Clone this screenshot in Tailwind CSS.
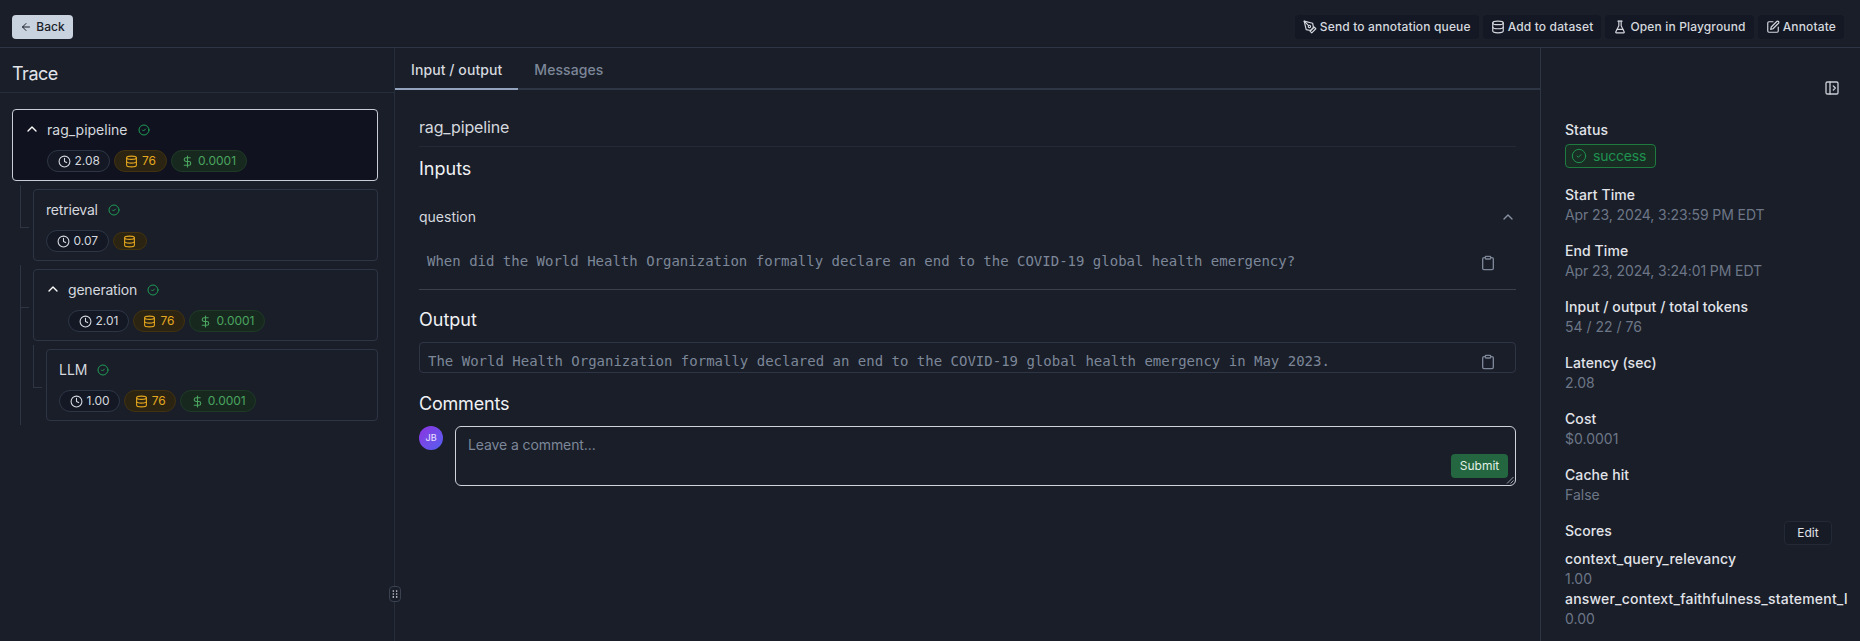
<!DOCTYPE html>
<html lang="en">
<head>
    <meta charset="UTF-8">
    <title>Trace</title>
    <script src="https://cdn.jsdelivr.net/npm/@tailwindcss/browser@4"></script>
</head>
<body class="bg-[#191e29] text-[#e2e4e9] font-['Inter',sans-serif] h-[641px] overflow-hidden">
    <!-- Top bar -->
    <header class="h-[48px] border-b border-[#2e3646] flex items-start justify-between pt-[15px] pl-3 pr-4">
        <button class="h-6 w-[61px] rounded bg-[#c9d2df] text-[#191e29] text-xs font-medium flex items-center justify-center gap-1">
            <svg class="w-3 h-3" viewBox="0 0 24 24" fill="none" stroke="currentColor" stroke-width="2" stroke-linecap="round" stroke-linejoin="round"><path d="m12 19-7-7 7-7"/><path d="M19 12H5"/></svg>
            Back
        </button>
        <div class="flex items-center gap-1 text-xs font-medium tracking-[0.15px] text-[#d5d8de]">
            <button class="h-6 px-2 rounded bg-[#141824] flex items-center gap-[3px]">
                <svg class="w-[14px] h-[14px]" viewBox="0 0 24 24" fill="none" stroke="currentColor" stroke-width="2" stroke-linecap="round" stroke-linejoin="round"><path d="m12 19 7-7 3 3-7 7-3-3z"/><path d="m18 13-1.5-7.5L2 2l3.5 14.5L13 18l5-5z"/><path d="m2 2 7.586 7.586"/><circle cx="11" cy="11" r="2"/></svg>
                Send to annotation queue
            </button>
            <button class="h-6 px-2 rounded bg-[#141824] flex items-center gap-[3px]">
                <svg class="w-[14px] h-[14px]" viewBox="0 0 24 24" fill="none" stroke="currentColor" stroke-width="2" stroke-linecap="round" stroke-linejoin="round"><ellipse cx="12" cy="5" rx="9" ry="3"/><path d="M3 5v14a9 3 0 0 0 18 0V5"/><path d="M3 12a9 3 0 0 0 18 0"/></svg>
                Add to dataset
            </button>
            <button class="h-6 px-2 rounded bg-[#141824] flex items-center gap-[3px]">
                <svg class="w-[14px] h-[14px]" viewBox="0 0 24 24" fill="none" stroke="currentColor" stroke-width="2" stroke-linecap="round" stroke-linejoin="round"><path d="M10 2v7.527a2 2 0 0 1-.211.896L4.72 20.55a1 1 0 0 0 .9 1.45h12.76a1 1 0 0 0 .9-1.45l-5.069-10.127A2 2 0 0 1 14 9.527V2"/><path d="M8.5 2h7"/><path d="M7 16h10"/></svg>
                Open in Playground
            </button>
            <button class="h-6 px-2 rounded bg-[#141824] flex items-center gap-[3px]">
                <svg class="w-[14px] h-[14px]" viewBox="0 0 24 24" fill="none" stroke="currentColor" stroke-width="2" stroke-linecap="round" stroke-linejoin="round"><path d="M12 3H5a2 2 0 0 0-2 2v14a2 2 0 0 0 2 2h14a2 2 0 0 0 2-2v-7"/><path d="M18.4 2.6a2.1 2.1 0 1 1 3 3L12 15l-4 1 1-4z"/></svg>
                Annotate
            </button>
        </div>
    </header>

    <div class="relative flex h-[593px]">
        <!-- Trace tree -->
        <aside class="w-[395px] shrink-0 border-r border-[#262d3b]">
            <h2 class="h-[45px] border-b border-[#262d3b] px-3 pt-[7px] flex items-center text-lg tracking-[-0.5px]">Trace</h2>
            <div class="pt-4 pl-3 pr-4 flex flex-col gap-2">
                <!-- rag_pipeline -->
                <div class="h-[72px] rounded border border-[#c8ccd4] bg-[#10131f] pt-[10px] px-3">
                    <div class="h-5 flex items-center text-sm text-[#d5d8de]">
                        <svg class="w-4 h-4 -ml-px mr-[7px] -translate-y-px text-white" viewBox="0 0 24 24" fill="none" stroke="currentColor" stroke-width="2" stroke-linecap="round" stroke-linejoin="round"><path d="m18 15-6-6-6 6"/></svg>
                        rag_pipeline
                        <svg class="w-3 h-3 ml-[10px] text-[#1f9d55]" viewBox="0 0 24 24" fill="none" stroke="currentColor" stroke-width="2" stroke-linecap="round" stroke-linejoin="round"><circle cx="12" cy="12" r="10"/><path d="m9 12 2 2 4-4"/></svg>
                    </div>
                    <div class="mt-[10px] ml-[22px] flex items-center gap-1 text-xs">
                        <span class="h-[22px] px-[9.5px] rounded-full border border-[#2e3646] bg-[#141824] flex items-center gap-1 text-[#d5d8de]">
                            <svg class="w-[13px] h-[13px]" viewBox="0 0 24 24" fill="none" stroke="currentColor" stroke-width="2" stroke-linecap="round" stroke-linejoin="round"><circle cx="12" cy="12" r="10"/><path d="M12 6v6l4 2"/></svg>
                            2.08
                        </span>
                        <span class="h-[22px] px-[9.5px] rounded-full border border-[#423210] bg-[#2c2412] flex items-center gap-1 text-[#e5a81e]">
                            <svg class="w-[13px] h-[13px]" viewBox="0 0 24 24" fill="none" stroke="currentColor" stroke-width="2" stroke-linecap="round" stroke-linejoin="round"><ellipse cx="12" cy="5" rx="9" ry="3"/><path d="M3 5v14a9 3 0 0 0 18 0V5"/><path d="M3 12a9 3 0 0 0 18 0"/></svg>
                            76
                        </span>
                        <span class="h-[22px] px-[9.5px] rounded-full border border-[#1f3a26] bg-[#17291f] flex items-center gap-1 text-[#4ba45f]">
                            <svg class="w-[13px] h-[13px]" viewBox="0 0 24 24" fill="none" stroke="currentColor" stroke-width="2" stroke-linecap="round" stroke-linejoin="round"><path d="M12 2v20"/><path d="M17 5H9.5a3.5 3.5 0 0 0 0 7h5a3.5 3.5 0 0 1 0 7H6"/></svg>
                            0.0001
                        </span>
                    </div>
                </div>

                <!-- retrieval -->
                <div class="relative ml-[21px] h-[72px] rounded border border-[#2e3646] pt-[10px] px-3">
                    <span class="absolute left-[-14px] top-[-5px] w-[9px] h-[43px] border-l border-b border-[#2e3646]"></span>
                    <div class="h-5 flex items-center text-sm text-[#d5d8de] tracking-[-0.2px]">
                        retrieval
                        <svg class="w-3 h-3 ml-[10px] text-[#1f9d55]" viewBox="0 0 24 24" fill="none" stroke="currentColor" stroke-width="2" stroke-linecap="round" stroke-linejoin="round"><circle cx="12" cy="12" r="10"/><path d="m9 12 2 2 4-4"/></svg>
                    </div>
                    <div class="mt-[10px] h-[22px] flex items-center gap-1 text-xs">
                        <span class="h-[22px] px-[9.5px] rounded-full border border-[#2e3646] bg-[#141824] flex items-center gap-1 text-[#d5d8de]">
                            <svg class="w-[13px] h-[13px]" viewBox="0 0 24 24" fill="none" stroke="currentColor" stroke-width="2" stroke-linecap="round" stroke-linejoin="round"><circle cx="12" cy="12" r="10"/><path d="M12 6v6l4 2"/></svg>
                            0.07
                        </span>
                        <span class="h-[18px] w-[34px] rounded-full border border-[#423210] bg-[#2c2412] flex items-center justify-center text-[#e5a81e]">
                            <svg class="w-[13px] h-[13px]" viewBox="0 0 24 24" fill="none" stroke="currentColor" stroke-width="2" stroke-linecap="round" stroke-linejoin="round"><ellipse cx="12" cy="5" rx="9" ry="3"/><path d="M3 5v14a9 3 0 0 0 18 0V5"/><path d="M3 12a9 3 0 0 0 18 0"/></svg>
                        </span>
                    </div>
                </div>

                <!-- generation -->
                <div class="relative ml-[21px] h-[72px] rounded border border-[#2e3646] pt-[10px] px-3">
                    <span class="absolute left-[-14px] top-[-5px] w-[9px] h-[43px] border-l border-b border-[#2e3646]"></span>
                    <span class="absolute left-[-14px] top-[38px] w-px h-[117px] bg-[#2e3646]"></span>
                    <div class="h-5 flex items-center text-sm text-[#d5d8de] tracking-[-0.2px]">
                        <svg class="w-4 h-4 -ml-px mr-[7px] -translate-y-px text-white" viewBox="0 0 24 24" fill="none" stroke="currentColor" stroke-width="2" stroke-linecap="round" stroke-linejoin="round"><path d="m18 15-6-6-6 6"/></svg>
                        generation
                        <svg class="w-3 h-3 ml-[10px] text-[#1f9d55]" viewBox="0 0 24 24" fill="none" stroke="currentColor" stroke-width="2" stroke-linecap="round" stroke-linejoin="round"><circle cx="12" cy="12" r="10"/><path d="m9 12 2 2 4-4"/></svg>
                    </div>
                    <div class="mt-[10px] ml-[22px] flex items-center gap-1 text-xs">
                        <span class="h-[22px] px-[9.5px] rounded-full border border-[#2e3646] bg-[#141824] flex items-center gap-1 text-[#d5d8de]">
                            <svg class="w-[13px] h-[13px]" viewBox="0 0 24 24" fill="none" stroke="currentColor" stroke-width="2" stroke-linecap="round" stroke-linejoin="round"><circle cx="12" cy="12" r="10"/><path d="M12 6v6l4 2"/></svg>
                            2.01
                        </span>
                        <span class="h-[22px] px-[9.5px] rounded-full border border-[#423210] bg-[#2c2412] flex items-center gap-1 text-[#e5a81e]">
                            <svg class="w-[13px] h-[13px]" viewBox="0 0 24 24" fill="none" stroke="currentColor" stroke-width="2" stroke-linecap="round" stroke-linejoin="round"><ellipse cx="12" cy="5" rx="9" ry="3"/><path d="M3 5v14a9 3 0 0 0 18 0V5"/><path d="M3 12a9 3 0 0 0 18 0"/></svg>
                            76
                        </span>
                        <span class="h-[22px] px-[9.5px] rounded-full border border-[#1f3a26] bg-[#17291f] flex items-center gap-1 text-[#4ba45f]">
                            <svg class="w-[13px] h-[13px]" viewBox="0 0 24 24" fill="none" stroke="currentColor" stroke-width="2" stroke-linecap="round" stroke-linejoin="round"><path d="M12 2v20"/><path d="M17 5H9.5a3.5 3.5 0 0 0 0 7h5a3.5 3.5 0 0 1 0 7H6"/></svg>
                            0.0001
                        </span>
                    </div>
                </div>

                <!-- LLM -->
                <div class="relative ml-[34px] h-[72px] rounded border border-[#2e3646] pt-[10px] px-3">
                    <span class="absolute left-[-14px] top-[-5px] w-[9px] h-[43px] border-l border-b border-[#2e3646]"></span>
                    <div class="h-5 flex items-center text-sm text-[#d5d8de]">
                        LLM
                        <svg class="w-3 h-3 ml-[10px] text-[#1f9d55]" viewBox="0 0 24 24" fill="none" stroke="currentColor" stroke-width="2" stroke-linecap="round" stroke-linejoin="round"><circle cx="12" cy="12" r="10"/><path d="m9 12 2 2 4-4"/></svg>
                    </div>
                    <div class="mt-[10px] flex items-center gap-1 text-xs">
                        <span class="h-[22px] px-[9.5px] rounded-full border border-[#2e3646] bg-[#141824] flex items-center gap-1 text-[#d5d8de]">
                            <svg class="w-[13px] h-[13px]" viewBox="0 0 24 24" fill="none" stroke="currentColor" stroke-width="2" stroke-linecap="round" stroke-linejoin="round"><circle cx="12" cy="12" r="10"/><path d="M12 6v6l4 2"/></svg>
                            1.00
                        </span>
                        <span class="h-[22px] px-[9.5px] rounded-full border border-[#423210] bg-[#2c2412] flex items-center gap-1 text-[#e5a81e]">
                            <svg class="w-[13px] h-[13px]" viewBox="0 0 24 24" fill="none" stroke="currentColor" stroke-width="2" stroke-linecap="round" stroke-linejoin="round"><ellipse cx="12" cy="5" rx="9" ry="3"/><path d="M3 5v14a9 3 0 0 0 18 0V5"/><path d="M3 12a9 3 0 0 0 18 0"/></svg>
                            76
                        </span>
                        <span class="h-[22px] px-[9.5px] rounded-full border border-[#1f3a26] bg-[#17291f] flex items-center gap-1 text-[#4ba45f]">
                            <svg class="w-[13px] h-[13px]" viewBox="0 0 24 24" fill="none" stroke="currentColor" stroke-width="2" stroke-linecap="round" stroke-linejoin="round"><path d="M12 2v20"/><path d="M17 5H9.5a3.5 3.5 0 0 0 0 7h5a3.5 3.5 0 0 1 0 7H6"/></svg>
                            0.0001
                        </span>
                    </div>
                </div>
            </div>
        </aside>

        <!-- Main column -->
        <main class="flex-1 min-w-0">
            <div class="h-[42px] border-b-2 border-[#2e3646] flex text-sm font-medium tracking-[0.08px]">
                <div class="h-[42px] px-4 pt-[3px] flex items-center border-b-2 border-[#94a3bd] text-[#d5d8de]">Input / output</div>
                <div class="h-10 px-4 pt-[3px] flex items-center text-[#7d8798]">Messages</div>
            </div>
            <div class="px-6">
                <div class="h-[57px] pt-[25px] border-b border-[#232936] leading-6 text-base tracking-[-0.15px] text-[#d5d8de]">rag_pipeline</div>
                <h3 class="mt-[10px] h-6 leading-6 text-lg text-[#f0f1f3]">Inputs</h3>
                <div class="mt-[26px] h-5 flex items-center justify-between text-sm text-[#d5d8de]">
                    question
                    <svg class="w-4 h-4 text-[#8a93a3]" viewBox="0 0 24 24" fill="none" stroke="currentColor" stroke-width="2" stroke-linecap="round" stroke-linejoin="round"><path d="m18 15-6-6-6 6"/></svg>
                </div>
                <div class="h-[63px] border-b border-[#3a404c] pt-6 pl-2 pr-5 flex justify-between items-start font-['DejaVu_Sans_Mono',monospace] text-sm leading-5 text-[#7d8798]">
                    <span>When did the World Health Organization formally declare an end to the COVID-19 global health emergency?</span>
                    <svg class="w-4 h-4 mt-1 text-[#7d8798]" viewBox="0 0 24 24" fill="none" stroke="currentColor" stroke-width="2" stroke-linecap="round" stroke-linejoin="round"><rect x="8" y="2" width="8" height="4" rx="1"/><path d="M16 4h2a2 2 0 0 1 2 2v14a2 2 0 0 1-2 2H6a2 2 0 0 1-2-2V6a2 2 0 0 1 2-2h2"/></svg>
                </div>
                <h3 class="mt-[18px] h-6 leading-6 text-lg text-[#f0f1f3]">Output</h3>
                <div class="mt-[10px] h-[31px] rounded border border-[#2e3646] pl-2 pr-[19px] pt-2 flex justify-between items-start font-['DejaVu_Sans_Mono',monospace] text-sm leading-5 text-[#7d8798]">
                    <span>The World Health Organization formally declared an end to the COVID-19 global health emergency in May 2023.</span>
                    <svg class="w-4 h-4 mt-[3px] text-[#7d8798]" viewBox="0 0 24 24" fill="none" stroke="currentColor" stroke-width="2" stroke-linecap="round" stroke-linejoin="round"><rect x="8" y="2" width="8" height="4" rx="1"/><path d="M16 4h2a2 2 0 0 1 2 2v14a2 2 0 0 1-2 2H6a2 2 0 0 1-2-2V6a2 2 0 0 1 2-2h2"/></svg>
                </div>
                <h3 class="mt-[19px] h-6 leading-6 text-lg tracking-[-0.2px] text-[#f0f1f3]">Comments</h3>
                <div class="mt-[10px] flex gap-3">
                    <div class="w-6 h-6 rounded-full bg-gradient-to-br from-[#8b2fe0] to-[#4f5ff0] flex items-center justify-center text-[9px] font-medium text-[#e6dcff]">JB</div>
                    <div class="relative flex-1 h-[60px] rounded-md border border-[#d0d3d9] px-3 pt-2 text-sm leading-5 tracking-[-0.1px] text-[#7d8798]">
                        Leave a comment...
                        <button class="absolute right-[7px] top-[27px] h-6 w-[57px] rounded bg-[#23663f] text-xs tracking-normal text-[#e2f0e6]">Submit</button>
                        <svg class="absolute right-[1px] bottom-[1px] w-2 h-2 text-[#9aa0aa]" viewBox="0 0 8 8" fill="none" stroke="currentColor" stroke-width="1"><path d="M1 7.5 7.5 1"/><path d="M4.5 7.5 7.5 4.5"/></svg>
                    </div>
                </div>
            </div>
        </main>

        <!-- Details sidebar -->
        <aside class="w-[320px] shrink-0 border-l border-[#2e3646] pl-6 pr-3 overflow-hidden text-sm leading-5">
            <div class="h-[72px] pt-8 flex justify-end pr-2">
                <svg class="w-4 h-4 text-[#c9ccd3]" viewBox="0 0 24 24" fill="none" stroke="currentColor" stroke-width="2" stroke-linecap="round" stroke-linejoin="round"><rect x="3" y="3" width="18" height="18" rx="2"/><path d="M9 3v18"/><path d="m14 9 3 3-3 3"/></svg>
            </div>
            <div class="font-medium tracking-[0.08px]">Status</div>
            <div class="mt-[4px] h-6 w-[91px] rounded border border-[#1f7a40] bg-[#192d25] flex items-center gap-[6px] px-[5px] tracking-[-0.2px] text-[#1f9350]">
                <svg class="w-4 h-4" viewBox="0 0 24 24" fill="none" stroke="currentColor" stroke-width="1.5" stroke-linecap="round" stroke-linejoin="round"><circle cx="12" cy="12" r="10"/><path d="m9 12 2 2 4-4"/></svg>
                success
            </div>
            <div class="mt-[17px] font-medium tracking-[0.08px]">Start Time</div>
            <div class="tracking-[-0.1px] text-[#6d7686]">Apr 23, 2024, 3:23:59 PM EDT</div>
            <div class="mt-4 font-medium tracking-[0.08px]">End Time</div>
            <div class="tracking-[-0.1px] text-[#6d7686]">Apr 23, 2024, 3:24:01 PM EDT</div>
            <div class="mt-4 font-medium tracking-[0.08px]">Input / output / total tokens</div>
            <div class="text-[#6d7686]">54 / 22 / 76</div>
            <div class="mt-4 font-medium tracking-[0.08px]">Latency (sec)</div>
            <div class="text-[#6d7686]">2.08</div>
            <div class="mt-4 font-medium tracking-[0.08px]">Cost</div>
            <div class="text-[#6d7686]">$0.0001</div>
            <div class="mt-4 font-medium tracking-[0.08px]">Cache hit</div>
            <div class="text-[#6d7686]">False</div>
            <div class="mt-4 flex justify-between items-start font-medium tracking-[0.08px] pr-[16px]">
                Scores
                <button class="h-6 w-12 rounded border border-[#232936] bg-[#171b26] text-xs font-normal">Edit</button>
            </div>
            <div class="mt-[4px] font-medium tracking-[0.2px]">context_query_relevancy</div>
            <div class="text-[#6d7686]">1.00</div>
            <div class="font-medium tracking-[0.2px] whitespace-nowrap overflow-hidden">answer_context_faithfulness_statement_level</div>
            <div class="text-[#6d7686]">0.00</div>
        </aside>

        <!-- Resize handle -->
        <div class="absolute left-[389px] top-[538px] w-3 h-4 rounded-sm border border-[#3a4252] bg-[#191e29] flex items-center justify-center">
            <svg class="w-[10px] h-[10px] text-[#c9ccd3]" viewBox="0 0 24 24" fill="none" stroke="currentColor" stroke-width="4" stroke-linecap="round"><path d="M8 5h.01M16 5h.01M8 12h.01M16 12h.01M8 19h.01M16 19h.01"/></svg>
        </div>
    </div>
</body>
</html>
